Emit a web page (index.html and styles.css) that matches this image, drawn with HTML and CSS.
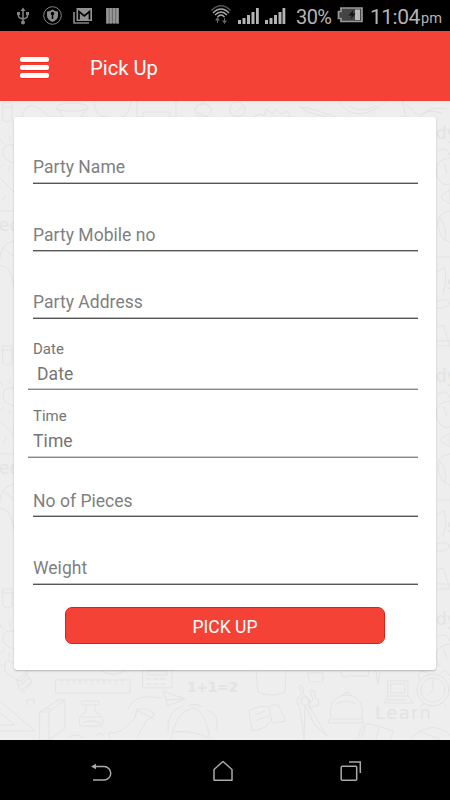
FILE: index.html
```html
<!DOCTYPE html>
<html lang="en">
<head>
<meta charset="utf-8">
<title>Pick Up</title>
<link rel="stylesheet" href="styles.css">
</head>
<body>
<div class="status">
  <svg class="status-left" width="130" height="31" viewBox="0 0 130 31" fill="none" stroke="#858585" stroke-width="1.5">
    <path d="M23 9v13M18.500 13v3q0 2 4.500 3M27.500 13v3q0 2-4.500 3"/>
    <g fill="#858585" stroke="none"><path d="M20.500 11L23 7.500l2.500 3.500zM17 12h3v3h-3zM26 12h3v3h-3z"/><circle cx="23" cy="22.500" r="2"/></g>
    <circle cx="52.500" cy="15.500" r="8.800" stroke-width="1"/>
    <path d="M47 11.500q3 0 5.500-2 2.500 2 5.500 2v4q0 4-5.500 6.500-5.500-2.500-5.500-6.500z" fill="#8c8c8c" stroke="none"/>
    <path d="M52.500 14v5" stroke="#000" stroke-width="1.500"/><circle cx="52.500" cy="13.500" r="1.700" fill="#000" stroke="none"/>
    <path d="M74 12v11h15" stroke-width="1.700"/>
    <path d="M76.500 8h15.500v13h-15.500z" fill="#929292" stroke="none"/><path d="M79 19.500v-8l5.300 4.500 5.200-4.500v8" stroke="#000" stroke-width="1.700"/>
    <path d="M106 8v15.500h13V8z" fill="#6c6c6c" stroke="none"/>
    <path d="M107.500 8v15.500M110.800 8v15.500M114.100 8v15.500M117.400 8v15.500" stroke="#969696" stroke-width="2.200"/>
  </svg>
  <div class="status-right">
    <svg width="76" height="31" viewBox="210 0 76 31" fill="none" stroke="#aaa">
      <path d="M211.500 10.500q9.500-9.500 19 0" stroke="#555" stroke-width="1.500"/><path d="M213 13q8-8 16 0M215 15q6-6 12 0M217.500 17q3.500-4 7 0" stroke-width="1.400"/>
      <path d="M217.500 18v5M224.500 18v5" stroke="#666"/><path d="M215 20.500h5L217.500 17zM222 20.500h5l-2.500 3.500z" fill="#666" stroke="none"/>
      <g fill="#b4b4b4" stroke="none"><path d="M238 20h3v4h-3zM242.500 18h3v6h-3zM247 15h3v9h-3zM251.500 12h3v12h-3zM256 8h2.800v16H256z"/><path d="M265 20h3v4h-3zM269.500 18h3v6h-3zM274 15h3v9h-3zM278.500 12h3v12h-3zM282.500 8h2.800v16h-2.800z"/></g>
    </svg>
    <span class="battery-text">30%</span>
    <svg class="battery" width="28" height="31" viewBox="336 0 28 31"><path d="M341 8h21v13.500h-21v-3h-2.500v-7h2.500z" fill="#444" stroke="#999" stroke-width="1.700"/><path d="M355 9.500h5v10.500h-5z" fill="#bbb"/><path d="M353.500 10l-5 5.500h3.500l-1.500 4 5-6h-3z" fill="#111"/></svg>
    <span class="clock">11:04</span><span class="pm">pm</span>
  </div>
</div>
<header>
  <div class="menu"><i></i><i></i><i></i></div>
  <h1>Pick Up</h1>
</header>
<main>
  <svg class="doodles" viewBox="0 101 450 639" fill="none" stroke="#e3e3e3" stroke-width="1" stroke-linecap="round" stroke-linejoin="round">
    <defs>
      <clipPath id="above"><path d="M0 101h450v566H0z"/></clipPath>
      <g id="edges">
        <path d="M3 103h9v17q-5 4-9 0zM2 107h11M14 145q-12-2-11 9 1 6 11 9M3 143l-3-4M10 141v-5M4 164l-3 3M10 166l-1 5M0 178l14 14M0 211h14M3 200l3-5M14 241q-13 2-14 17M0 265q12 1 14 22M3 248l10 8"/>
        <path d="M438 151q9-6 12 4M450 158q-19 2-12 20 5 9 12 6M444 164l3 9M442 195l8-5v14l-8-5zM450 211q-13 1-12 15 2 14 12 16M439 217q9 10 6 24M438 257h12M437 272l7-5q4 10-1 27M437 301q12-4 12 3-3 5-12 4M437 327l6-2 7 20M437 341h13M438 346h12"/>
        <g class="word"><text x="-1" y="231">ed</text><text x="436" y="139">dy</text><text x="447" y="289">s</text></g>
      </g>
    </defs>
    <use href="#edges"/><use href="#edges" y="243"/><g clip-path="url(#above)"><use href="#edges" y="486"/></g>
    <path d="M22 117q4-20 22-5l5 5M56 109q0-6 16-6t16 6q-16 5-32 0M58 110l5 7M86 110l-5 7M94 102q1 15 13 15M131 102q-1 12-9 15M137 101v16M143 117v-5h27v5M176 101v16M195 109q8-10 17 0M203 103a8 7 0 1 0 .1 0M198 112l8 5M230 112c-2-14 15-12 15-2 0 7-12 9-15 2zM236 112l8-7M254 117l5-3 5 2 2-7 7 5 3-5 5 5 6-3 3 6M299 107l10 1 27 9M300 107l8 5 18 5M338 101q18 26 49 0M349 106q12 8 27 0M402 101l4 16M405 104l16 13q8-12 26-8M421 114q8-5 21-1"/>
    <path d="M5 665q1-9 7-2 13-3 15 8 0 8-7 10l-9-5q-8-3-6-11zM17 680l9-7 6 9-8 10q-6-1-7-12zM20 685l8-6M23 689l7-6M0 701l35 30H0M0 713l15 12H0M27 705v-5l7-1v5M56 680h74v13H56zM62 680v4m6-4v4m6-4v4m6-4v4m6-4v4m6-4v4m6-4v4m6-4v4m6-4v4m6-4v4m6-4v4M40 712l18-12h7v28l-16 12h-9zM40 712h9v28M49 712l16-12M45 709h6M82 701h17v4H82zM86 705v7q-9 4-6 14h22q4-10-7-14v-7M82 717h19M83 723q10-5 18 1M102 671q10 7 22 0M143 670h29v18h-29zM148 671h19v4h-19zM147 679h4m3 0h4m3 0h4m-18 5h4m3 0h4m3 0h4M128 709q5-14 25-12l9 1M163 691l22 8-18 7-1-6zM166 700l18-1M110 738q-4-8 5-5 8-2 13-8l7-7 2-9 9 0 9 5-9 7-9 17M136 710l18 9M70 737q6-5 14 1M96 737q1-6 7-2"/>
    <path d="M171 739q4-27 22-31 12 2 17 31M168 731q-2-20 15-25M189 706q6-4 14 1M207 710q14 4 9 20M174 732q16-2 33 5"/>
    <path d="M256 671l2 21q14 6 27 0l1-21M249 711l3 20q15-3 17-8M269 707l3 16 14-2-8-16q-6-1-9 2-8-3-20 4M255 715l10-4M257 720l12-4M299 686q3-2 4 2l1 7q7 4 5 11l18 30-12-11-10-19-1 33-4-31q-7-8 2-14zM310 691q6-4 5 7 5 0 3 7l-9 3q-1-6 4-8zM331 718q-4-22 16-23 18 1 15 23M329 719h34v4h-34zM343 695q4-6 8 0M336 704q11-6 20 0M308 673h15v9h-13zM341 671q-1 9 7 5h20l1-5M376 671l2 13 2-13M388 681h20v15h-20zM391 684h14v9h-14zM388 696l-4 7h29l-5-7M387 700h19M358 739q3-17 12-15l24 7-4 8M365 727l-3 10M379 729l-3 10M412 737q21-18 38-2M419 731l20 8"/>
    <circle cx="433" cy="690" r="16"/><circle cx="433" cy="690" r="12"/><circle cx="305" cy="701" r="4"/><path d="M433 680v10l-5 5M420 681q-6-12 7-9M440 674q6-8 10 2M425 703l-5 4M443 703l4 4"/>
    <g class="word learn"><text x="375" y="719" textLength="56">Learn</text><text x="187" y="692" class="sum" textLength="51">1+1=2</text></g>
  </svg>
  <form class="card">
    <div class="field">Party Name</div>
    <div class="field light-below">Party Mobile no</div>
    <div class="field third">Party Address</div>
    <div class="picker date"><label>Date</label><span class="inset">Date</span></div>
    <div class="picker"><label>Time</label><span>Time</span></div>
    <div class="field pieces">No of Pieces</div>
    <div class="field">Weight</div>
    <button type="button">PICK UP</button>
  </form>
</main>
<nav>
  <svg width="450" height="60" viewBox="0 740 450 60" fill="none" stroke="#aaa" stroke-width="1.500">
    <path d="M93 766.500h11a6.700 6.700 0 0 1 0 13.500H93"/><path d="M91 766.500l5-2.700v5.400z" fill="#aaa" stroke="none"/>
    <path d="M214 780.200v-10.700l9-8 9 8v10.700z" stroke-linejoin="round"/>
    <rect x="341.200" y="766.200" width="15.500" height="14" rx="1"/><path d="M349 762h11.300v11"/>
  </svg>
</nav>
</body>
</html>
```
FILE: styles.css
```css
* { box-sizing: border-box; }
body { margin: 0; width: 450px; height: 800px; overflow: hidden; display: flex; flex-direction: column; font-family: Roboto, sans-serif; background: #000; }
.status { height: 31px; flex: none; display: flex; justify-content: space-between; background: #000; color: #b4b4b4; }
.status-right { display: flex; align-items: center; padding-right: 8px; line-height: 31px; }
.status svg { display: block; flex: none; }
.battery-text { font-size: 20px; margin-left: 10px; width: 40px; letter-spacing: -.6px; padding-top: 3px; }
.clock { font-size: 21px; margin-left: 6px; width: 51px; letter-spacing: -.5px; padding-top: 3px; }
.pm { font-size: 14.500px; width: 21px; padding-top: 6px; }
header { height: 70px; flex: none; background: #f44336; display: flex; align-items: center; padding: 3px 20px 0; gap: 41px; }
.menu { display: flex; flex-direction: column; gap: 3px; width: 29px; }
.menu i { height: 5px; border-radius: 2px; background: #fff; box-shadow: 0 1px #f22a1c; }
h1 { margin: 0; color: #fff; font-size: 20.200px; font-weight: 400; }
main { position: relative; flex: none; height: 639px; background: #eee; padding: 16px 14px; }
.doodles { position: absolute; left: 0; top: 0; width: 450px; height: 639px; }
.word { fill: #e3e3e3; stroke: none; font: 17px "DejaVu Sans", sans-serif; }
.learn { font-size: 18px; }
.sum { font-size: 14px; font-weight: 700; }
.card { position: relative; height: 553px; margin: 0; background: #fff; border-radius: 3px; box-shadow: 0 1px 2px rgba(0,0,0,.25); padding: 0 18px 0 14px; color: #808080; font-size: 17.500px; }
.field { height: 68px; margin-left: 5px; padding-bottom: 5px; display: flex; align-items: flex-end; border-bottom: 1px solid #555; box-shadow: inset 0 -1px #bbb; line-height: 21px; letter-spacing: .03px; }
.field:first-child { height: 67px; }
.light-below { height: 67px; padding-bottom: 4px; box-shadow: 0 1px #bbb; }
.pieces { height: 59px; padding-bottom: 4px; }
.picker { height: 68px; border-bottom: 1px solid #888; box-shadow: inset 0 -1px #ccc; display: flex; flex-direction: column; padding: 17px 0 0 5px; color: #757575; }
.picker.date { height: 71px; padding-top: 21px; }
.picker label { font-size: 15px; line-height: 18px; }
.picker span { line-height: 22px; margin-top: 5px; letter-spacing: .1px; }
.picker .inset { padding-left: 4px; }
button { display: block; width: 320px; height: 37px; margin: 22px 0 0 37px; padding: 2px 0 0; background: #f44336; border: 1px solid #e51a12; border-radius: 7px; color: #fff; font: 17.500px Roboto, sans-serif; }
nav { height: 60px; flex: none; background: #000; }
nav svg { display: block; }
```
